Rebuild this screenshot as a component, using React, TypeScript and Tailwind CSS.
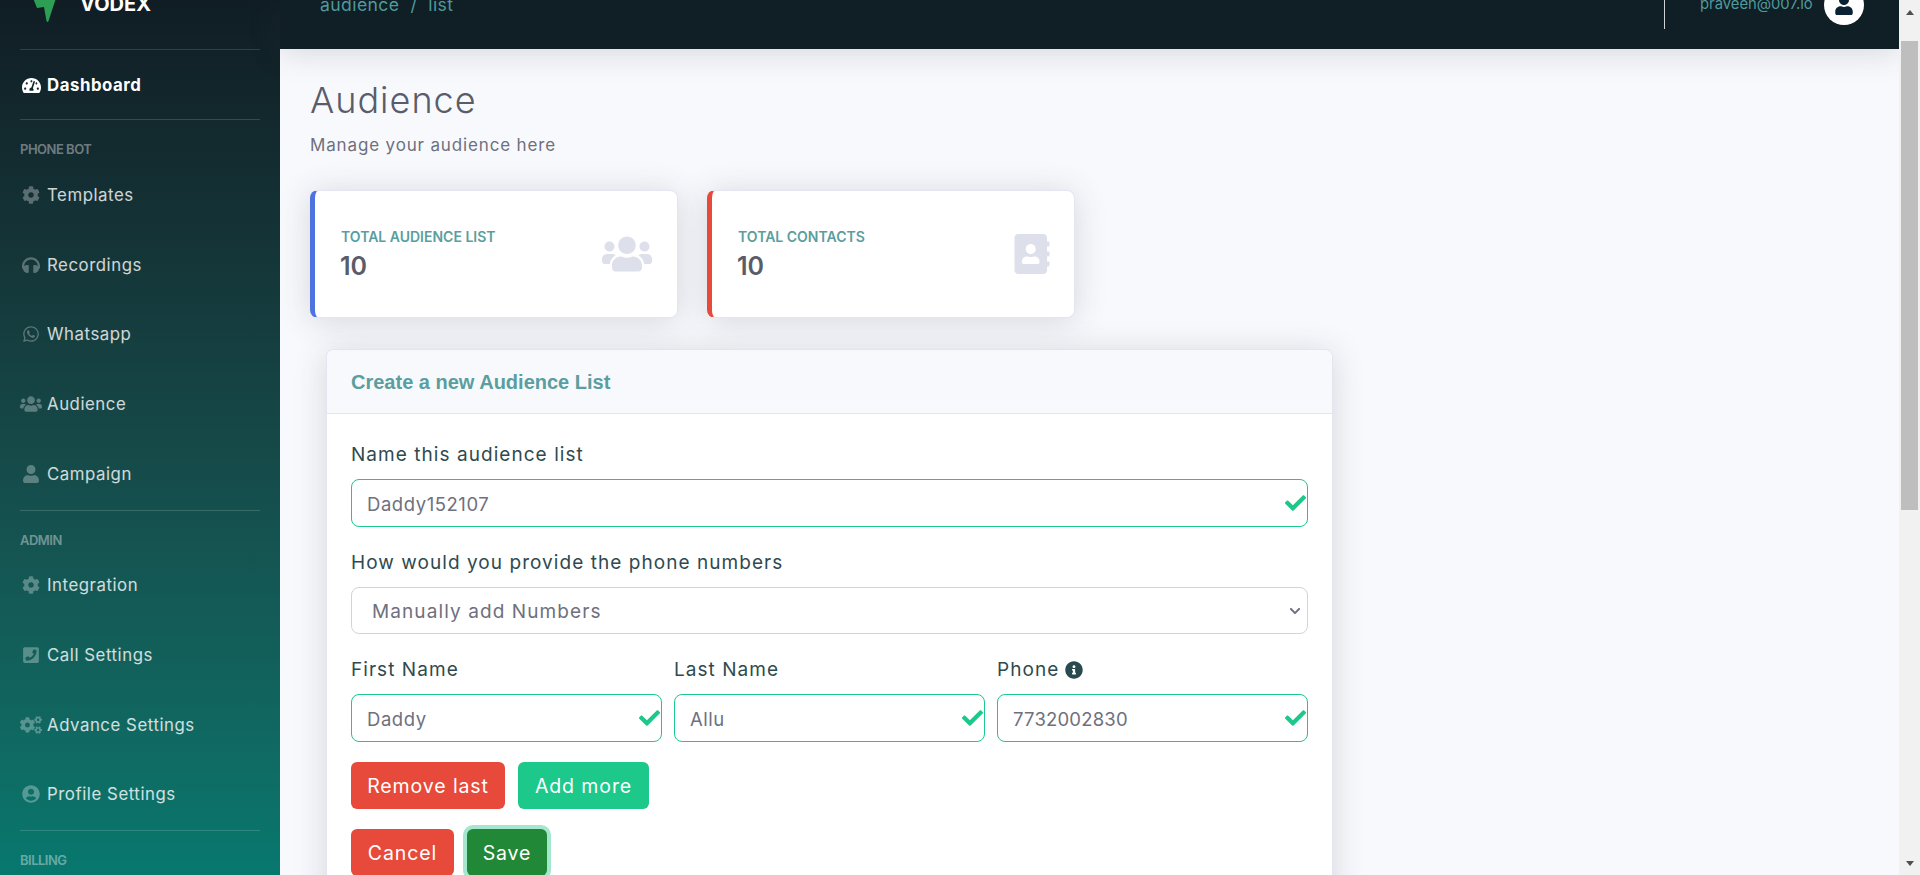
import {
  FaCheck,
  FaChevronDown,
  FaCog,
  FaCogs,
  FaHeadphones,
  FaInfoCircle,
  FaPhoneSquare,
  FaTachometerAlt,
  FaUser,
  FaUserCircle,
  FaUsers,
  FaWhatsapp,
  FaAddressBook,
} from "react-icons/fa";
import type { ReactNode } from "react";

function NavItem({
  icon,
  label,
  className,
}: {
  icon: ReactNode;
  label: string;
  className: string;
}) {
  return (
    <div className={`flex items-center text-white/80 text-[16.8px] tracking-[0.55px] leading-[24px] ${className}`}>
      <span className="w-[22px] mr-[5px] flex justify-center text-white/30 text-[18px]">{icon}</span>
      {label}
    </div>
  );
}

function Divider({ className }: { className: string }) {
  return <div className={`h-px bg-white/15 ${className}`} />;
}

function Heading({ label, className }: { label: string; className: string }) {
  return (
    <div className={`text-[13px] leading-[16px] font-semibold tracking-[-0.5px] text-white/40 ${className}`}>
      {label}
    </div>
  );
}

function StatCard({
  title,
  border,
  icon,
}: {
  title: string;
  border: string;
  icon: ReactNode;
}) {
  return (
    <div
      className={`w-[368px] h-[128px] bg-white rounded-[8px] border border-[#e3e6f0] border-l-[5px] ${border} shadow-[0_3px_32px_rgba(58,59,69,0.18)] flex items-center justify-between pl-[26px] pr-[25px]`}
    >
      <div className="pt-[1px]">
        <div className="text-[14px] leading-[16px] font-semibold uppercase text-[#5a9ea0]">{title}</div>
        <div className="text-[25px] leading-[30px] font-semibold text-[#5a5c69] mt-[6px] -ml-[1px]">10</div>
      </div>
      <div className="text-[#dddfeb]">{icon}</div>
    </div>
  );
}

function CheckInput({ value, spacing = "tracking-[0.55px]" }: { value: string; spacing?: string }) {
  return (
    <div
      className={`relative h-[48px] w-full rounded-[8px] border border-[#1cc88a] bg-white flex items-center pl-[15px] pt-[2px] text-[18.5px] text-[#6e707e] ${spacing}`}
    >
      {value}
      <FaCheck className="absolute right-[1px] top-1/2 -translate-y-1/2 text-[#1cc88a] text-[21px]" />
    </div>
  );
}

function Button({ label, className }: { label: string; className: string }) {
  return (
    <div className={`h-[47px] rounded-[6px] flex items-center justify-center ${className}`}>{label}</div>
  );
}

export default function App() {
  return (
    <div className="w-[1920px] h-[875px] overflow-hidden flex font-['Inter',sans-serif] bg-[#f8f9fd]">
      <aside className="w-[280px] h-full shrink-0 bg-gradient-to-b from-[#101d24] to-[#07786e] px-[20px] overflow-hidden flex flex-col">
        <div className="h-[49px] shrink-0 flex items-start relative">
          <svg width="24" height="24" viewBox="0 0 24 24" className="ml-[13px]">
            <path d="M0 -2 L4 8 L11 7 L13.5 21 Q14.5 23 15.5 21 L23 -2 Z" fill="#2f9e55" />
          </svg>
          <span className="ml-[23px] -mt-[8px] text-[20px] leading-[24px] font-bold text-white">VODEX</span>
        </div>
        <Divider className="shrink-0" />
        <div className="flex items-center text-white font-bold text-[16.8px] tracking-[0.55px] leading-[24px] mt-[23px] mb-[22px]">
          <span className="w-[22px] mr-[5px] flex justify-center text-[19px]">
            <FaTachometerAlt />
          </span>
          Dashboard
        </div>
        <Divider className="shrink-0" />
        <Heading label="PHONE BOT" className="mt-[21px]" />
        <NavItem icon={<FaCog />} label="Templates" className="mt-[26px]" />
        <NavItem icon={<FaHeadphones />} label="Recordings" className="mt-[46px]" />
        <NavItem icon={<FaWhatsapp />} label="Whatsapp" className="mt-[45px]" />
        <NavItem icon={<FaUsers className="text-[22px]" />} label="Audience" className="mt-[46px]" />
        <NavItem icon={<FaUser />} label="Campaign" className="mt-[46px]" />
        <Divider className="shrink-0 mt-[24px]" />
        <Heading label="ADMIN" className="mt-[21px]" />
        <NavItem icon={<FaCog />} label="Integration" className="mt-[25px]" />
        <NavItem icon={<FaPhoneSquare />} label="Call Settings" className="mt-[46px]" />
        <NavItem icon={<FaCogs className="text-[22px]" />} label="Advance Settings" className="mt-[46px]" />
        <NavItem icon={<FaUserCircle />} label="Profile Settings" className="mt-[45px]" />
        <Divider className="shrink-0 mt-[24px]" />
        <Heading label="BILLING" className="mt-[21px]" />
      </aside>

      <div className="flex-1 min-w-0 flex flex-col">
        <header className="h-[49px] shrink-0 bg-[#101e25] flex items-start relative z-10 shadow-[0_3px_32px_rgba(58,59,69,0.18)]">
          <div className="ml-[40px] -mt-[7px] text-[17.6px] tracking-[0.4px] leading-[24px] text-[#4f9a9c] flex gap-[11px]">
            <span>audience</span>
            <span>/</span>
            <span>list</span>
          </div>
          <div className="absolute left-[1384px] top-0 w-px h-[29px] bg-white/80" />
          <div className="absolute left-[1420px] -top-[6px] text-[14.8px] leading-[20px] text-[#4f9a9c]">
            praveen@007.io
          </div>
          <div className="absolute left-[1544px] -top-[15px] w-[40px] h-[40px] rounded-full bg-white flex items-center justify-center text-[#0b2233] text-[20px] overflow-hidden">
            <FaUser />
          </div>
        </header>

        <main className="flex-1 min-h-0 overflow-hidden pl-[30px]">
          <h1 className="mt-[29px] text-[36px] tracking-[1px] leading-[44px] font-light text-[#5a5c69]">Audience</h1>
          <p className="mt-[11px] text-[17px] tracking-[0.85px] leading-[24px] text-[#6e707e]">Manage your audience here</p>
          <div className="flex gap-[29px] mt-[33px]">
            <StatCard title="Total Audience List" border="border-l-[#4e73df]" icon={<FaUsers className="text-[50px]" />} />
            <StatCard
              title="Total Contacts"
              border="border-l-[#e74a3b]"
              icon={<FaAddressBook className="text-[40px] -mr-[3px]" />}
            />
          </div>

          <section className="w-[1007px] ml-[16px] mt-[31px] bg-white rounded-[8px] border border-[#e3e6f0] shadow-[0_3px_32px_rgba(58,59,69,0.18)] overflow-hidden">
            <div className="h-[64px] bg-[#f8f9fd] border-b border-[#e3e6f0] flex items-center pl-[24px] font-['Liberation_Sans',sans-serif] font-bold text-[20px] text-[#5a9ea0]">
              Create a new Audience List
            </div>
            <div className="px-[24px] pb-[40px] text-[#2f4a4f] text-[19px] tracking-[1.05px] leading-[26px]">
              <div className="mt-[28px] mb-[11px]">Name this audience list</div>
              <CheckInput value="Daddy152107" />
              <div className="mt-[23px] mb-[11px]">How would you provide the phone numbers</div>
              <div className="relative h-[47px] rounded-[8px] border border-[#d1d3e2] flex items-center pl-[20px] pt-[2px] text-[19px] tracking-[1.1px] text-[#6e707e]">
                Manually add Numbers
                <FaChevronDown className="absolute right-[6px] top-1/2 -translate-y-1/2 text-[12px]" />
              </div>
              <div className="grid grid-cols-3 gap-[12px] mt-[23px]">
                <div>
                  <div className="mb-[11px]">First Name</div>
                  <CheckInput value="Daddy" />
                </div>
                <div>
                  <div className="mb-[11px]">Last Name</div>
                  <CheckInput value="Allu" />
                </div>
                <div>
                  <div className="mb-[11px] flex items-center gap-[6px]">
                    Phone <FaInfoCircle className="text-[#2b4a50] text-[18px]" />
                  </div>
                  <CheckInput value="7732002830" spacing="tracking-[0.2px]" />
                </div>
              </div>
              <div className="flex gap-[13px] mt-[20px] text-[19.5px] tracking-[0.9px] text-white">
                <Button label="Remove last" className="w-[154px] bg-[#e74a3b]" />
                <Button label="Add more" className="w-[131px] bg-[#1cc88a]" />
              </div>
              <div className="flex gap-[13px] mt-[20px] text-[19.5px] tracking-[0.9px] text-white">
                <Button label="Cancel" className="w-[103px] bg-[#e74a3b]" />
                <Button label="Save" className="w-[80px] bg-[#218838] ring-4 ring-[#a5e6cf]" />
              </div>
            </div>
          </section>
        </main>
      </div>

      <div className="w-[21px] shrink-0 h-full bg-[#f1f1f1] flex flex-col items-center relative z-20">
        <div className="h-[24px] flex items-center justify-center">
          <div className="w-0 h-0 border-x-[4.5px] border-x-transparent border-b-[5px] border-b-[#505050]" />
        </div>
        <div className="w-[17px] h-[469px] mt-[17px] bg-[#bebebe]" />
        <div className="mt-auto h-[24px] flex items-center justify-center">
          <div className="w-0 h-0 border-x-[4.5px] border-x-transparent border-t-[5px] border-t-[#505050]" />
        </div>
      </div>
    </div>
  );
}
